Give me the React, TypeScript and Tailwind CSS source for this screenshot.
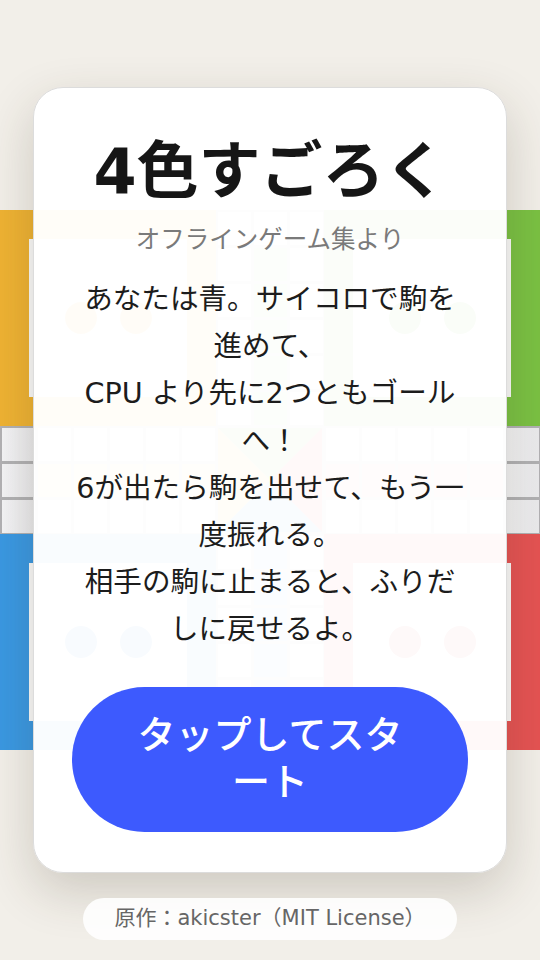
import React from "react";

const FONT = { fontFamily: '"DejaVu Sans", "Noto Sans CJK JP", sans-serif' };

type Color = "y" | "g" | "b" | "r";
const homeBg: Record<Color, string> = {
  y: "bg-[#eeb233]",
  g: "bg-[#7ac143]",
  b: "bg-[#3a98e2]",
  r: "bg-[#e55353]",
};
const tokenBg: Record<Color, string> = {
  y: "bg-[#e9a51c]",
  g: "bg-[#62ad2c]",
  b: "bg-[#2c7fd0]",
  r: "bg-[#d23b3b]",
};
const laneBg: Record<Color, string> = {
  y: "bg-[#f5cf78]",
  g: "bg-[#a9d888]",
  b: "bg-[#86bdec]",
  r: "bg-[#ef9393]",
};

function Home({ c }: { c: Color }) {
  return (
    <div className={`${homeBg[c]} w-[216px] h-[216px] p-[29px]`}>
      <div className="w-full h-full bg-[#fbfbfb] grid grid-cols-2 place-items-center px-6">
        <div className={`${tokenBg[c]} w-9 h-9 rounded-full border-2 border-white shadow`} />
        <div className={`${tokenBg[c]} w-9 h-9 rounded-full border-2 border-white shadow`} />
      </div>
    </div>
  );
}

function Cell({ lane }: { lane?: Color }) {
  return (
    <div className="w-[36px] h-[36px] pt-[2px] pl-[2px] pb-[1px] pr-[1px]">
      <div className={`w-full h-full ${lane ? laneBg[lane] : "bg-gradient-to-r from-[#f4f4f6] to-[#eaeaec]"}`} />
    </div>
  );
}

function VArm({ lane, col }: { lane: Color; col: "top" | "bottom" }) {
  const rows = [0, 1, 2, 3, 4, 5];
  return (
    <div className="grid grid-cols-3 bg-[#b1b1b3]">
      {rows.map((r) =>
        [0, 1, 2].map((cc) => {
          const isLane = cc === 1 && (col === "top" ? r > 0 : r < 5);
          return <Cell key={`${r}-${cc}`} lane={isLane ? lane : undefined} />;
        })
      )}
    </div>
  );
}

function HArm({ lane, side }: { lane: Color; side: "left" | "right" }) {
  const cols = [0, 1, 2, 3, 4, 5];
  return (
    <div className="grid grid-cols-6 bg-[#b1b1b3]">
      {[0, 1, 2].map((r) =>
        cols.map((cc) => {
          const isLane = r === 1 && (side === "left" ? cc > 0 : cc < 5);
          return <Cell key={`${r}-${cc}`} lane={isLane ? lane : undefined} />;
        })
      )}
    </div>
  );
}

function Center() {
  return (
    <div className="w-[108px] h-[108px] bg-[#b1b1b3] p-[2px]">
      <svg viewBox="0 0 100 100" className="w-full h-full block">
        <polygon points="0,0 100,0 50,50" fill="#7ac143" />
        <polygon points="100,0 100,100 50,50" fill="#e55353" />
        <polygon points="0,100 100,100 50,50" fill="#3a98e2" />
        <polygon points="0,0 0,100 50,50" fill="#eeb233" />
      </svg>
    </div>
  );
}

function Board() {
  return (
    <div className="w-[540px] h-[540px] flex flex-col">
      <div className="flex">
        <Home c="y" />
        <VArm lane="g" col="top" />
        <Home c="g" />
      </div>
      <div className="flex">
        <HArm lane="y" side="left" />
        <Center />
        <HArm lane="r" side="right" />
      </div>
      <div className="flex">
        <Home c="b" />
        <VArm lane="b" col="bottom" />
        <Home c="r" />
      </div>
    </div>
  );
}

export default function App() {
  return (
    <div
      className="relative w-[540px] h-[960px] overflow-hidden bg-[#f2efe9] flex items-center justify-center"
      style={FONT}
    >
      <Board />

      <div className="absolute inset-0 flex items-center justify-center">
        <div className="w-[474px] bg-white/[0.97] rounded-[30px] border border-[#dcdcdc] shadow-[0_18px_50px_rgba(60,50,30,0.2)] px-[38px] pt-[48px] pb-[40px] flex flex-col items-center text-center">
          <h1 className="text-[62px] font-bold leading-[1.16] text-[#161616]">4色すごろく</h1>
          <p className="mt-[14px] text-[24.5px] leading-[1.5] text-[#7a7a7a]">オフラインゲーム集より</p>
          <div className="mt-[17px] w-full text-[28.6px] leading-[47.2px] text-[#1c1c1c]">
            <p>あなたは青。サイコロで駒を進めて、</p>
            <p>CPU より先に2つともゴールへ！</p>
            <p>6が出たら駒を出せて、もう一度振れる。</p>
            <p>相手の駒に止まると、ふりだしに戻せるよ。</p>
          </div>
          <button className="mt-[33px] w-full rounded-full bg-[#3d5afe] text-white text-[38px] font-medium leading-[1.25] px-12 py-[25px]">
            タップしてスタート
          </button>
        </div>
      </div>

      <div className="absolute bottom-5 left-0 right-0 flex justify-center">
        <div className="h-[42px] flex items-center rounded-full bg-white/90 px-[31px] text-[21px] text-[#666666]">
          原作：akicster（MIT License）
        </div>
      </div>
    </div>
  );
}
